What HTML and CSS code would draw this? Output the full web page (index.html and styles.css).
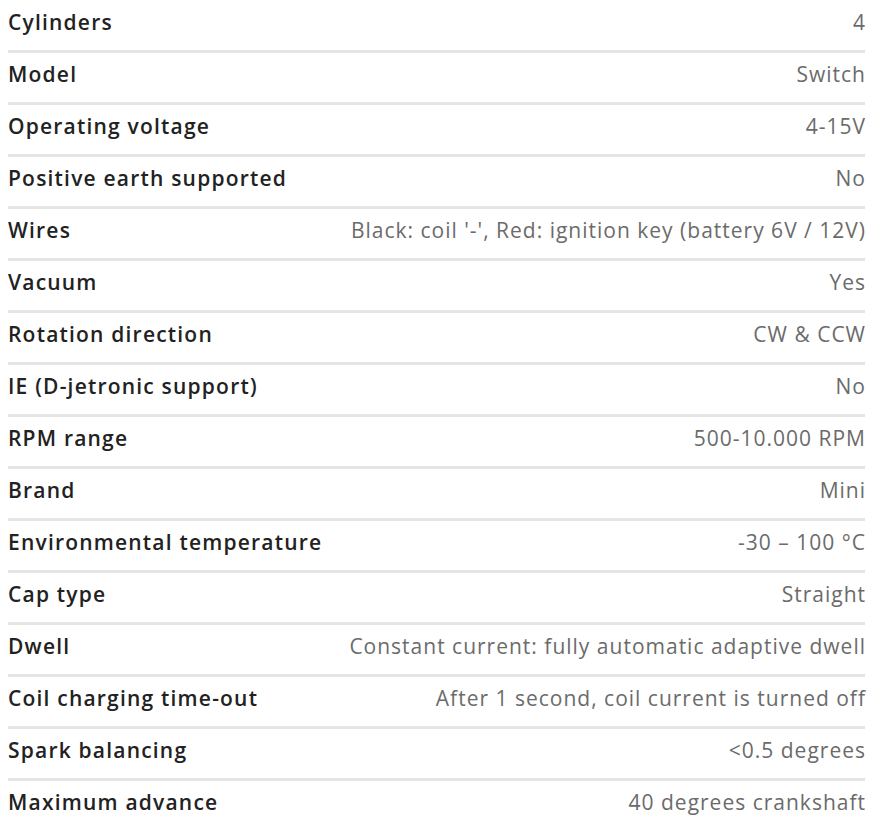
FILE: index.html
```html
<!DOCTYPE html>
<html>
<head>
<meta charset="utf-8">
<link rel="stylesheet" href="styles.css">
</head>
<body>
<div class="specs">
  <div class="row"><span class="label">Cylinders</span><span class="value">4</span></div>
  <div class="row"><span class="label">Model</span><span class="value">Switch</span></div>
  <div class="row"><span class="label">Operating voltage</span><span class="value">4-15V</span></div>
  <div class="row"><span class="label">Positive earth supported</span><span class="value">No</span></div>
  <div class="row"><span class="label">Wires</span><span class="value">Black: coil '-', Red: ignition key (battery 6V / 12V)</span></div>
  <div class="row"><span class="label">Vacuum</span><span class="value">Yes</span></div>
  <div class="row"><span class="label">Rotation direction</span><span class="value">CW &amp; CCW</span></div>
  <div class="row"><span class="label">IE (D-jetronic support)</span><span class="value">No</span></div>
  <div class="row"><span class="label">RPM range</span><span class="value">500-10.000 RPM</span></div>
  <div class="row"><span class="label">Brand</span><span class="value">Mini</span></div>
  <div class="row"><span class="label">Environmental temperature</span><span class="value">-30 – 100 °C</span></div>
  <div class="row"><span class="label">Cap type</span><span class="value">Straight</span></div>
  <div class="row"><span class="label">Dwell</span><span class="value">Constant current: fully automatic adaptive dwell</span></div>
  <div class="row"><span class="label">Coil charging time-out</span><span class="value">After 1 second, coil current is turned off</span></div>
  <div class="row"><span class="label">Spark balancing</span><span class="value">&lt;0.5 degrees</span></div>
  <div class="row last"><span class="label">Maximum advance</span><span class="value">40 degrees crankshaft</span></div>
</div>
</body>
</html>
```
FILE: styles.css
```css
html, body {
  margin: 0;
  padding: 0;
  background: #ffffff;
}
body {
  font-family: "Open Sans", "Noto Sans", sans-serif;
  font-size: 21px;
  letter-spacing: 1px;
}
.specs {
  margin: 1px 13px 0 8px;
  display: flex;
  flex-direction: column;
}
.row {
  display: flex;
  justify-content: space-between;
  align-items: flex-start;
  padding-top: 7px;
  height: 42px;
  border-bottom: 3px solid #e5e5e5;
}
.row.last {
  border-bottom: none;
}
.label {
  font-weight: 600;
  color: #222222;
  line-height: 28px;
  letter-spacing: 1.2px;
}
.value {
  color: #6b6b6b;
  line-height: 28px;
  margin-right: -1px;
}
```
